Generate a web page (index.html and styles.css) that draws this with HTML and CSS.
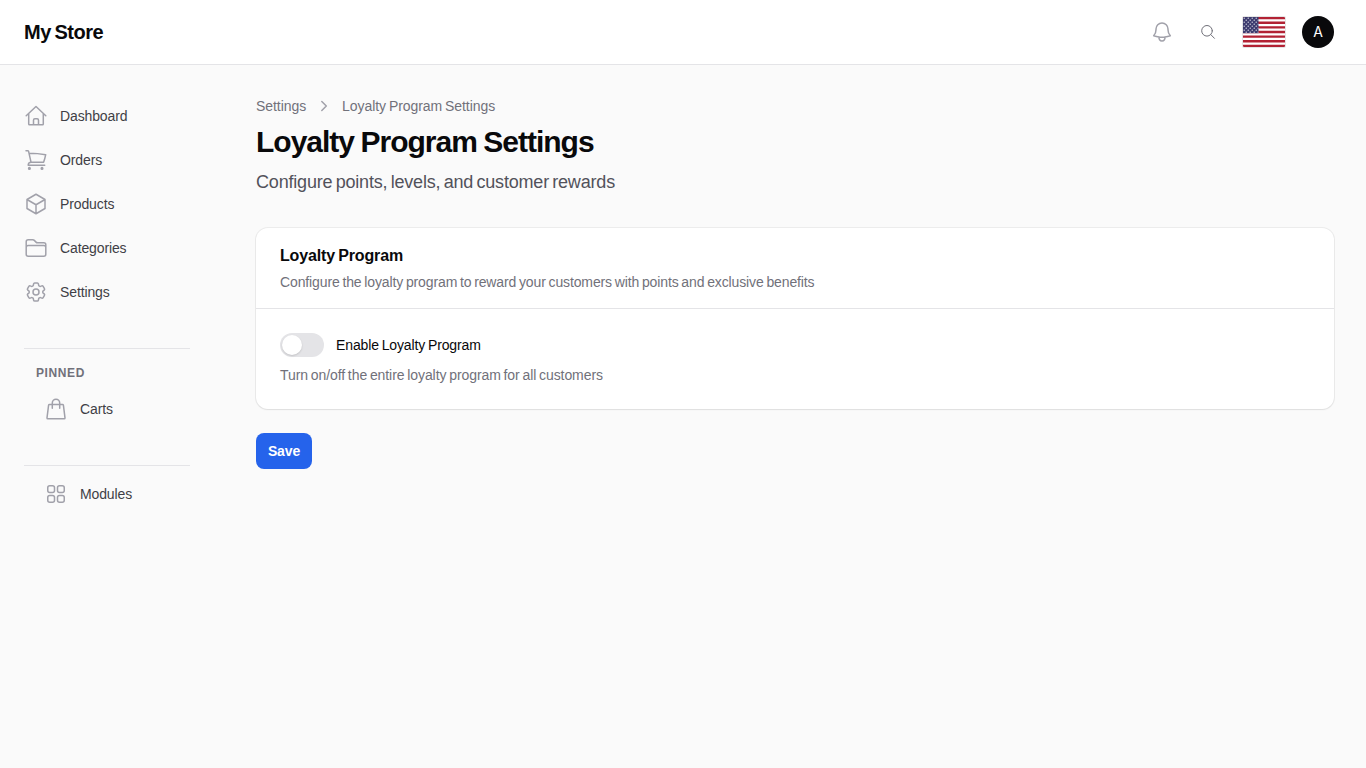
FILE: index.html
```html
<!DOCTYPE html>
<html lang="en">
<head>
    <meta charset="UTF-8">
    <meta name="viewport" content="width=device-width, initial-scale=1.0">
    <title>Loyalty Program Settings - My Store</title>
    <link rel="stylesheet" href="styles.css">
</head>
<body>
    <header class="topbar">
        <a class="brand">My Store</a>
        <div class="topbar-actions">
            <svg class="icon" viewBox="0 0 24 24"><path d="M14.857 17.082a23.848 23.848 0 0 0 5.454-1.31A8.967 8.967 0 0 1 18 9.75V9A6 6 0 0 0 6 9v.75a8.967 8.967 0 0 1-2.312 6.022c1.733.64 3.56 1.085 5.455 1.31m5.714 0a24.255 24.255 0 0 1-5.714 0m5.714 0a3 3 0 1 1-5.714 0"/></svg>
            <svg class="icon search" viewBox="0 0 16 16"><circle cx="7" cy="6.8" r="5.3"/><path d="m10.8 10.6 3.6 3.7"/></svg>
            <svg class="flag" viewBox="0 0 42 30">
                <defs>
                    <pattern id="stars" width="4" height="4" patternUnits="userSpaceOnUse">
                        <circle cx="1.2" cy="1.2" r=".6"/>
                        <circle cx="3.2" cy="3.2" r=".6"/>
                    </pattern>
                </defs>
                <rect width="42" height="30" fill="#fff"/>
                <path d="M0 1.15h42M0 5.77h42M0 10.38h42M0 15h42M0 19.62h42M0 24.23h42M0 28.85h42" stroke="#b22234" stroke-width="2.31"/>
                <rect width="15.5" height="16.15" fill="#3c3b6e"/>
                <rect width="15.5" height="16.15" fill="url(#stars)"/>
            </svg>
            <span class="avatar">A</span>
        </div>
    </header>

    <div class="layout">
        <nav class="sidebar">
            <a class="nav-item">
                <svg class="icon" viewBox="0 0 24 24"><path d="M2.2 11.8 12 2.5l9.8 9.3M4.7 9.6V20c0 .5.3.8.8.8h13c.5 0 .8-.3.8-.8V9.6M9.5 20.8v-4.6c0-.9.5-1.4 1.4-1.4h2.2c.9 0 1.4.5 1.4 1.4v4.6"/></svg>
                Dashboard
            </a>
            <a class="nav-item">
                <svg class="icon" viewBox="0 0 24 24"><path d="M2 2.7h1.700c.5 0 .8.300.9.700L7 14.200M5.100 5.200c5.700 0 11.200.500 16.600 1.500-.5 2.600-1.200 5.100-2.100 7.500H7c-1.600 0-2.800 1.300-2.800 3.100h16.500"/><circle cx="5.4" cy="20.4" r=".8"/><circle cx="18" cy="20.4" r=".8"/></svg>
                Orders
            </a>
            <a class="nav-item">
                <svg class="icon" viewBox="0 0 24 24"><path d="m21 7.5-9-5.25L3 7.5m18 0-9 5.25m9-5.25v9l-9 5.25M3 7.5l9 5.25M3 7.5v9l9 5.25m0-9v9"/></svg>
                Products
            </a>
            <a class="nav-item">
                <svg class="icon" viewBox="0 0 24 24"><path d="M2.2 11.5V5.8c0-1.200.8-2 2-2h4.600c.6 0 1.100.2 1.500.6l1.700 1.700c.4.400 1 .7 1.600.7h6.200c1.200 0 2 .8 2 2v9.400c0 1.200-.8 2-2 2H4.200c-1.200 0-2-.8-2-2v-6.700c0-1.200.8-2 2-2h15.600c1.200 0 2 .8 2 2"/></svg>
                Categories
            </a>
            <a class="nav-item">
                <svg class="icon" viewBox="0 0 24 24"><path d="M9.594 3.94c.09-.542.56-.94 1.11-.94h2.593c.55 0 1.02.398 1.11.94l.213 1.281c.063.374.313.686.645.87.074.04.147.083.22.127.325.196.72.257 1.075.124l1.217-.456a1.125 1.125 0 0 1 1.37.49l1.296 2.247a1.125 1.125 0 0 1-.26 1.431l-1.003.827c-.293.241-.438.613-.43.992a7.723 7.723 0 0 1 0 .255c-.008.378.137.75.43.991l1.004.827c.424.35.534.955.26 1.43l-1.298 2.247a1.125 1.125 0 0 1-1.369.491l-1.217-.456c-.355-.133-.75-.072-1.076.124a6.47 6.47 0 0 1-.22.128c-.331.183-.581.495-.644.869l-.213 1.281c-.09.543-.56.94-1.11.94h-2.594c-.55 0-1.019-.398-1.11-.94l-.213-1.281c-.062-.374-.312-.686-.644-.87a6.52 6.52 0 0 1-.22-.127c-.325-.196-.72-.257-1.076-.124l-1.217.456a1.125 1.125 0 0 1-1.369-.49l-1.297-2.247a1.125 1.125 0 0 1 .26-1.431l1.004-.827c.292-.24.437-.613.43-.991a6.932 6.932 0 0 1 0-.255c.007-.38-.138-.751-.43-.992l-1.004-.827a1.125 1.125 0 0 1-.26-1.43l1.297-2.247a1.125 1.125 0 0 1 1.37-.491l1.216.456c.356.133.751.072 1.076-.124.072-.044.146-.086.22-.128.332-.183.582-.495.644-.869l.214-1.28Z"/><circle cx="12" cy="12" r="3"/></svg>
                Settings
            </a>

            <div class="nav-group pinned">
                <h3 class="nav-heading">Pinned</h3>
                <a class="nav-item nested">
                    <svg class="icon" viewBox="0 0 24 24"><path d="M5.4 7.4h13.200c.4 0 .7.300.8.700l1.600 12.800c0 .5-.3.900-.8.900H3.800c-.5 0-.8-.4-.8-.9L4.600 8.100c.1-.4.4-.7.8-.7ZM8.300 11.300V6a3.700 3.700 0 0 1 7.400 0v5.300"/></svg>
                    Carts
                </a>
            </div>

            <div class="nav-group">
                <a class="nav-item nested">
                    <svg class="icon" viewBox="0 0 24 24"><rect x="3.75" y="3.75" width="6.75" height="6.75" rx="2"/><rect x="13.5" y="3.75" width="6.75" height="6.75" rx="2"/><rect x="3.75" y="13.5" width="6.75" height="6.75" rx="2"/><rect x="13.5" y="13.5" width="6.75" height="6.75" rx="2"/></svg>
                    Modules
                </a>
            </div>
        </nav>

        <main class="content">
            <div class="breadcrumb">
                <span>Settings</span>
                <svg class="icon chevron" viewBox="0 0 20 20"><path d="m7.8 5.5 4.5 4.5-4.5 4.5"/></svg>
                <span>Loyalty Program Settings</span>
            </div>
            <h1>Loyalty Program Settings</h1>
            <p class="lead">Configure points, levels, and customer rewards</p>

            <section class="card">
                <div class="card-header">
                    <h2>Loyalty Program</h2>
                    <p class="hint">Configure the loyalty program to reward your customers with points and exclusive benefits</p>
                </div>
                <div class="card-body">
                    <div class="switch-row">
                        <span class="switch"><span class="knob"></span></span>
                        <span>Enable Loyalty Program</span>
                    </div>
                    <p class="hint switch-hint">Turn on/off the entire loyalty program for all customers</p>
                </div>
            </section>

            <button class="save" type="button">Save</button>
        </main>
    </div>
</body>
</html>
```
FILE: styles.css
```css
* { box-sizing: border-box; margin: 0; padding: 0; }
body {
    background: #fafafa;
    color: #09090b;
    font: 14px/20px "Liberation Sans", Arial, sans-serif;
    letter-spacing: -0.12px;
    word-spacing: -1px;
}
.icon {
    width: 24px;
    height: 24px;
    flex: none;
    fill: none;
    stroke: #a1a1aa;
    stroke-width: 1.5;
    stroke-linecap: round;
    stroke-linejoin: round;
}

/* top bar */
.topbar {
    height: 65px;
    padding: 0 32px 0 24px;
    display: flex;
    align-items: center;
    justify-content: space-between;
    background: #fff;
    border-bottom: 1px solid #e4e4e7;
}
.brand { font-size: 20px; line-height: 28px; font-weight: 700; letter-spacing: -0.45px; word-spacing: -1.6px; }
.topbar-actions { display: flex; align-items: center; }
.search { width: 16px; height: 16px; margin: 0 27px 0 26px; stroke: #71717a; stroke-width: 1; }
.flag { width: 42px; height: 30px; margin-right: 17px; border-radius: 1px; fill: #fff; box-shadow: 0 0 0 1px rgba(0, 0, 0, 0.1); }
.avatar {
    width: 32px;
    height: 32px;
    border-radius: 50%;
    background: #09090b;
    color: #fff;
    font-family: Inter, sans-serif;
    line-height: 32px;
    text-align: center;
}

/* sidebar */
.layout { display: flex; }
.sidebar { width: 224px; flex: none; padding: 29px 34px 0 24px; color: #3f3f46; }
.nav-item { height: 44px; display: flex; align-items: center; gap: 12px; }
.nav-group { border-top: 1px solid #e4e4e7; padding-top: 6px; }
.pinned { margin-top: 34px; padding-top: 14px; height: 117px; }
.nav-heading { padding-left: 12px; margin-bottom: 4px; font-size: 12px; color: #71717a; text-transform: uppercase; letter-spacing: 0.6px; }
.nested { padding-left: 20px; }

/* page */
.content { flex: 1; padding: 31px 32px 0; }
.breadcrumb { display: flex; align-items: center; gap: 8px; color: #71717a; letter-spacing: -0.06px; }
.chevron { width: 20px; height: 20px; }
h1 { margin-top: 8px; font-size: 30px; line-height: 36px; letter-spacing: -1px; word-spacing: -0.9px; }
.lead { margin: 8px 0 32px; font-size: 18px; line-height: 28px; letter-spacing: -0.19px; word-spacing: -1.5px; color: #52525b; }
.card {
    background: #fff;
    border-radius: 12px;
    box-shadow: 0 0 0 1px rgba(9, 9, 11, 0.06), 0 1px 2px rgba(0, 0, 0, 0.06);
}
.card-header { padding: 16px 24px; border-bottom: 1px solid #e4e4e7; }
.card-body { padding: 24px; }
h2 { margin-bottom: 4px; font-size: 16px; line-height: 24px; letter-spacing: -0.15px; }
.hint { color: #71717a; }
.switch-hint { letter-spacing: -0.08px; }
.switch-row { display: flex; align-items: center; gap: 12px; margin-bottom: 8px; }
.switch { width: 44px; height: 24px; padding: 2px; border-radius: 12px; background: #e4e4e7; }
.knob { display: block; width: 20px; height: 20px; border-radius: 50%; background: #fff; box-shadow: 0 1px 2px rgba(0, 0, 0, 0.15); }
.save {
    width: 56px;
    height: 36px;
    margin-top: 24px;
    border: 0;
    border-radius: 8px;
    background: #2563eb;
    color: #fff;
    font: 700 14px/20px "Liberation Sans", Arial, sans-serif;
    letter-spacing: -0.12px;
}
```
